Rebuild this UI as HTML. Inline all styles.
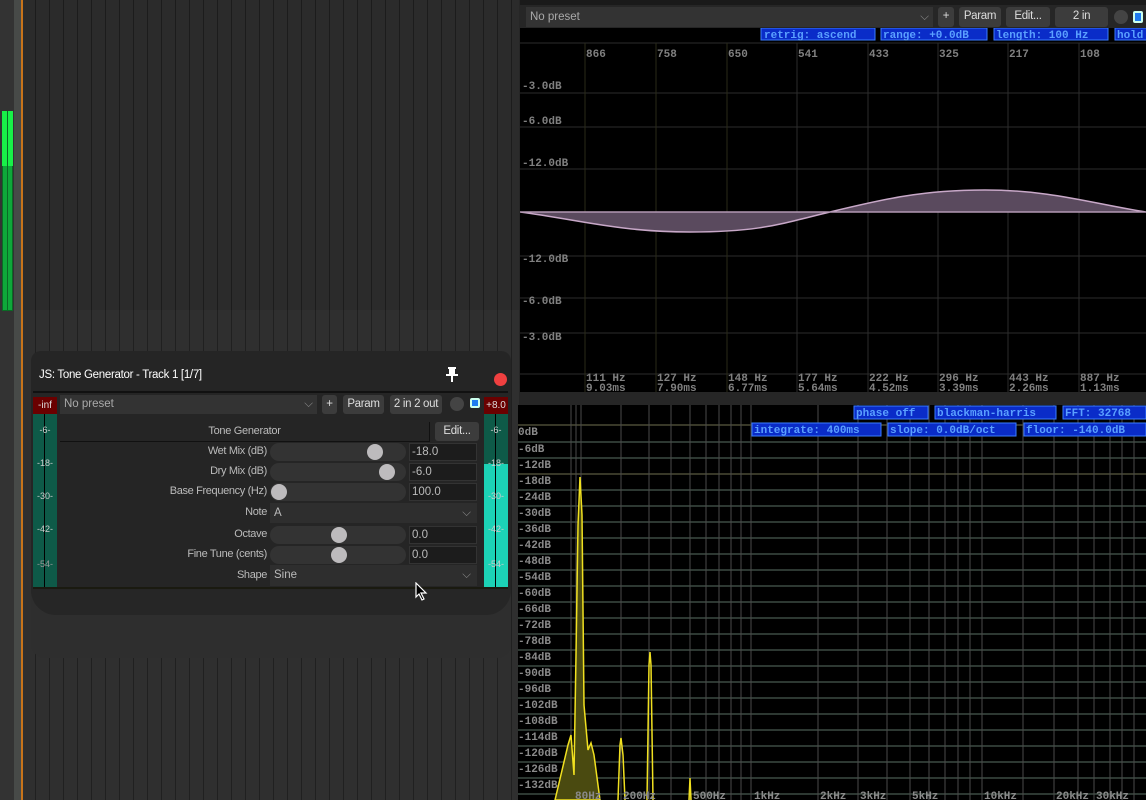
<!DOCTYPE html>
<html><head><meta charset="utf-8"><style>
*{margin:0;padding:0;box-sizing:border-box}
body{width:1146px;height:800px;overflow:hidden;background:#2a2a2a;position:relative;font-family:"Liberation Sans",sans-serif}
.abs{position:absolute}
.arr{background:repeating-linear-gradient(90deg,transparent 0 13px,#1c1c1c 13px 14px);}
.btn{position:absolute;background:#3c3c3c;color:#ddd;font-size:11.5px;letter-spacing:-0.3px;text-align:center;border-radius:3px;line-height:19px}
.lbl{position:absolute;right:879px;color:#bbb;font-size:11px;letter-spacing:-0.35px;text-align:right;width:200px}
.trk{position:absolute;left:270px;width:136px;height:18px;background:#333;border-radius:9px}
.knob{position:absolute;width:16px;height:16px;border-radius:50%;background:#bdbbbd;top:1px}
.val{position:absolute;left:409px;width:68px;height:18px;background:#1c1c1c;border:1px solid #333;color:#bbb;font-size:11.5px;padding-left:2px;line-height:16px}
.ml{position:absolute;font-size:9px;color:#ccc;width:24px;text-align:center}
</style></head><body>
<div class="abs arr" style="left:22px;top:0;width:500px;height:800px;background-color:#2b2b2b"></div>
<div class="abs" style="left:22px;top:310px;width:500px;height:490px;background:rgba(255,255,255,0.02)"></div>
<div class="abs" style="left:0;top:0;width:14px;height:800px;background:#333"></div>
<div class="abs" style="left:2px;top:111px;width:11px;height:200px;background:#0fa83a;border:1px solid #0a6a25"></div>
<div class="abs" style="left:2px;top:111px;width:11px;height:55px;background:#18f048"></div>
<div class="abs" style="left:7px;top:111px;width:1px;height:200px;background:#0a6a25"></div>
<div class="abs" style="left:14px;top:0;width:7px;height:800px;background:#474a48"></div>
<div class="abs" style="left:21px;top:0;width:2px;height:800px;background:#c8741a"></div>
<div class="abs" style="left:31px;top:560px;width:480px;height:98px;background:#2e2e2e;border-radius:14px"></div>
<div class="abs" style="left:31px;top:351px;width:480px;height:250px;background:#252525;border-radius:10px"></div>
<div class="abs" style="left:31px;top:590px;width:480px;height:25px;background:#262626;border-radius:0 0 40px 40px"></div>
<div class="abs" style="left:39px;top:369px;color:#fff;font-size:11.5px;letter-spacing:-0.3px">JS: Tone Generator - Track 1 [1/7]</div>
<svg class="abs" style="left:444px;top:367px" width="16" height="16"><rect x="4" y="0" width="8" height="2" fill="#fff"/><rect x="5" y="2" width="6" height="6" fill="#fff"/><rect x="2" y="7" width="12" height="2" fill="#fff"/><rect x="7" y="9" width="2" height="6" fill="#fff"/></svg>
<div class="abs" style="left:494px;top:373px;width:13px;height:13px;border-radius:50%;background:#f04040"></div>
<div class="abs" style="left:33px;top:391px;width:475px;height:2px;background:#111"></div>
<div class="abs" style="left:33px;top:397px;width:24px;height:190px;background:#0e5a48"></div>
<div class="abs" style="left:33px;top:397px;width:24px;height:17px;background:#6a0000;color:#ddd;font-size:10px;text-align:center;line-height:17px">-inf</div>
<div class="abs" style="left:44px;top:414px;width:1px;height:173px;background:#000"></div>
<div class="ml" style="left:33px;top:425px">-6-</div><div class="ml" style="left:33px;top:458px">-18-</div><div class="ml" style="left:33px;top:491px">-30-</div><div class="ml" style="left:33px;top:524px">-42-</div><div class="ml" style="left:33px;top:559px;color:#999">-54-</div>
<div class="abs" style="left:484px;top:397px;width:24px;height:190px;background:#0e5a48"></div>
<div class="abs" style="left:484px;top:464px;width:24px;height:123px;background:#1cd2b6"></div>
<div class="abs" style="left:484px;top:397px;width:24px;height:17px;background:#6a0000;color:#ddd;font-size:10px;text-align:center;line-height:17px">+8.0</div>
<div class="abs" style="left:495px;top:414px;width:1px;height:173px;background:#000"></div>
<div class="ml" style="left:484px;top:425px">-6-</div><div class="ml" style="left:484px;top:458px">-18-</div><div class="ml" style="left:484px;top:491px">-30-</div><div class="ml" style="left:484px;top:524px">-42-</div><div class="ml" style="left:484px;top:559px">-54-</div>
<div class="abs" style="left:60px;top:395px;width:257px;height:19px;background:#333;color:#aaa;font-size:11.5px;padding-left:4px;line-height:19px">No preset<span style="position:absolute;right:4px;color:#888">⌵</span></div>
<div class="btn" style="left:322px;top:395px;width:15px">+</div>
<div class="btn" style="left:343px;top:395px;width:41px">Param</div>
<div class="btn" style="left:390px;top:395px;width:52px">2 in 2 out</div>
<div class="abs" style="left:450px;top:397px;width:14px;height:14px;border-radius:50%;background:#444"></div>
<div class="abs" style="left:470px;top:398px;width:10px;height:10px;border-radius:2px;background:#1e7cf0;border:2px solid #cfe"></div>
<div class="abs" style="left:60px;top:422px;width:370px;height:20px;border-bottom:1px solid #111;border-right:1px solid #111;color:#bbb;font-size:11px;letter-spacing:-0.3px;text-align:center;line-height:19px">Tone Generator</div>
<div class="btn" style="left:435px;top:422px;width:44px">Edit...</div>
<div class="lbl" style="top:445px">Wet Mix (dB)</div><div class="trk" style="top:443px"><div class="knob" style="left:97px"></div></div><div class="val" style="top:443px">-18.0</div>
<div class="lbl" style="top:465px">Dry Mix (dB)</div><div class="trk" style="top:463px"><div class="knob" style="left:109px"></div></div><div class="val" style="top:463px">-6.0</div>
<div class="lbl" style="top:485px">Base Frequency (Hz)</div><div class="trk" style="top:483px"><div class="knob" style="left:1px"></div></div><div class="val" style="top:483px">100.0</div>
<div class="lbl" style="top:506px">Note</div><div class="abs" style="left:270px;top:503px;width:207px;height:20px;background:#2e2e2e;color:#bbb;font-size:11.5px;padding-left:4px;line-height:20px">A<span style="position:absolute;right:6px;color:#888">⌵</span></div>
<div class="lbl" style="top:528px">Octave</div><div class="trk" style="top:526px"><div class="knob" style="left:61px"></div></div><div class="val" style="top:526px">0.0</div>
<div class="lbl" style="top:548px">Fine Tune (cents)</div><div class="trk" style="top:546px"><div class="knob" style="left:61px"></div></div><div class="val" style="top:546px">0.0</div>
<div class="lbl" style="top:569px">Shape</div><div class="abs" style="left:270px;top:565px;width:207px;height:21px;background:#2e2e2e;color:#bbb;font-size:11.5px;padding-left:4px;line-height:21px">Sine<span style="position:absolute;right:6px;color:#888">⌵</span></div>
<div class="abs" style="left:33px;top:587px;width:475px;height:2px;background:#1a1a10"></div>
<svg class="abs" style="left:415px;top:582px" width="14" height="20"><path d="M1 1 L1 15 L4 12 L7 18 L9 17 L6 11 L11 11 Z" fill="#000" stroke="#fff" stroke-width="1.2"/></svg>

<div class="abs" style="left:519px;top:0;width:627px;height:405px;background:#262626"></div>
<div class="abs" style="left:520px;top:0;width:626px;height:5px;background:#1a1a1a"></div>
<div class="abs" style="left:526px;top:7px;width:407px;height:20px;background:#333;color:#aaa;font-size:11.5px;padding-left:4px;line-height:20px">No preset<span style="position:absolute;right:4px;color:#888">⌵</span></div>
<div class="btn" style="left:938px;top:7px;width:16px;height:20px">+</div>
<div class="btn" style="left:959px;top:7px;width:42px;height:20px">Param</div>
<div class="btn" style="left:1006px;top:7px;width:44px;height:20px">Edit...</div>
<div class="btn" style="left:1055px;top:7px;width:53px;height:20px">2 in</div>
<div class="abs" style="left:1114px;top:10px;width:14px;height:14px;border-radius:50%;background:#444"></div>
<div class="abs" style="left:1133px;top:11px;width:10px;height:12px;border-radius:2px;background:#1e7cf0;border:2px solid #cfe"></div>
<svg class="abs" style="left:520px;top:28px" width="626" height="372">
<rect width="626" height="364" fill="#000"/>
<g font-family="Liberation Mono,monospace" font-size="11" font-weight="bold">
<rect x="241" y="0" width="114" height="12" fill="#0a2cc8" stroke="#3a7cff"/><text x="244" y="10" fill="#5aa0ff">retrig: ascend</text>
<rect x="361" y="0" width="106" height="12" fill="#0a2cc8" stroke="#3a7cff"/><text x="363" y="10" fill="#5aa0ff">range: +0.0dB</text>
<rect x="474" y="0" width="114" height="12" fill="#0a2cc8" stroke="#3a7cff"/><text x="476" y="10" fill="#5aa0ff">length: 100 Hz</text>
<rect x="595" y="0" width="40" height="12" fill="#0a2cc8" stroke="#3a7cff"/><text x="597" y="10" fill="#5aa0ff">hold</text>
</g>
<g stroke="#2c2c2c" stroke-width="1">
<line x1="0" y1="15" x2="626" y2="15"/><line x1="0" y1="65" x2="626" y2="65"/><line x1="0" y1="99" x2="626" y2="99"/><line x1="0" y1="141" x2="626" y2="141"/><line x1="0" y1="184" x2="626" y2="184"/><line x1="0" y1="228" x2="626" y2="228"/><line x1="0" y1="270" x2="626" y2="270"/><line x1="0" y1="305" x2="626" y2="305"/><line x1="0" y1="346" x2="626" y2="346"/>
<line x1="65" y1="15" x2="65" y2="364" stroke="#2a2a18"/><line x1="136" y1="15" x2="136" y2="364" stroke="#2a2a18"/><line x1="207" y1="15" x2="207" y2="364" stroke="#2a2a18"/><line x1="277" y1="15" x2="277" y2="364"/><line x1="348" y1="15" x2="348" y2="364"/><line x1="418" y1="15" x2="418" y2="364"/><line x1="488" y1="15" x2="488" y2="364"/><line x1="559" y1="15" x2="559" y2="364"/>
</g>
<path d="M0 184 C 60 192, 100 204, 170 204 C 240 204, 260 196, 310 184 C 360 172, 400 162, 465 162 C 530 162, 570 175, 626 184 Z" fill="#5a4a5e" stroke="#c8a8c8" stroke-width="1.5"/>
<line x1="0" y1="184" x2="626" y2="184" stroke="#a890a8"/>
<g font-family="Liberation Mono,monospace" font-size="11" fill="#808080" font-weight="bold">
<text x="66" y="29">866</text><text x="137" y="29">758</text><text x="208" y="29">650</text><text x="278" y="29">541</text><text x="349" y="29">433</text><text x="419" y="29">325</text><text x="489" y="29">217</text><text x="560" y="29">108</text>
<text x="2" y="61">-3.0dB</text><text x="2" y="96">-6.0dB</text><text x="2" y="138">-12.0dB</text><text x="2" y="234">-12.0dB</text><text x="2" y="276">-6.0dB</text><text x="2" y="312">-3.0dB</text>
<text x="66" y="353">111 Hz</text><text x="137" y="353">127 Hz</text><text x="208" y="353">148 Hz</text><text x="278" y="353">177 Hz</text><text x="349" y="353">222 Hz</text><text x="419" y="353">296 Hz</text><text x="489" y="353">443 Hz</text><text x="560" y="353">887 Hz</text>
<text x="66" y="363">9.03ms</text><text x="137" y="363">7.90ms</text><text x="208" y="363">6.77ms</text><text x="278" y="363">5.64ms</text><text x="349" y="363">4.52ms</text><text x="419" y="363">3.39ms</text><text x="489" y="363">2.26ms</text><text x="560" y="363">1.13ms</text>
</g>
</svg>
<svg class="abs" style="left:518px;top:405px" width="628" height="395">
<rect width="628" height="395" fill="#000"/>
<g stroke="#3c4a42" stroke-width="1.5">
<line x1="0" y1="20" x2="628" y2="20" stroke="#4a4a36"/><line x1="0" y1="37" x2="628" y2="37"/><line x1="0" y1="53" x2="628" y2="53"/><line x1="0" y1="69" x2="628" y2="69" stroke="#4a4a36"/><line x1="0" y1="85" x2="628" y2="85"/><line x1="0" y1="101" x2="628" y2="101"/><line x1="0" y1="117" x2="628" y2="117"/><line x1="0" y1="133" x2="628" y2="133"/><line x1="0" y1="149" x2="628" y2="149"/><line x1="0" y1="165" x2="628" y2="165"/><line x1="0" y1="181" x2="628" y2="181"/><line x1="0" y1="197" x2="628" y2="197"/><line x1="0" y1="213" x2="628" y2="213"/><line x1="0" y1="229" x2="628" y2="229"/><line x1="0" y1="245" x2="628" y2="245"/><line x1="0" y1="261" x2="628" y2="261"/><line x1="0" y1="277" x2="628" y2="277"/><line x1="0" y1="293" x2="628" y2="293"/><line x1="0" y1="309" x2="628" y2="309"/><line x1="0" y1="325" x2="628" y2="325"/><line x1="0" y1="341" x2="628" y2="341"/><line x1="0" y1="357" x2="628" y2="357"/><line x1="0" y1="373" x2="628" y2="373"/><line x1="0" y1="389" x2="628" y2="389"/>
</g>
<g stroke="#4a4a4a" stroke-width="1">
<line x1="53" y1="0" x2="53" y2="395"/><line x1="58" y1="0" x2="58" y2="395"/><line x1="63" y1="0" x2="63" y2="395"/><line x1="103" y1="0" x2="103" y2="395"/><line x1="131" y1="0" x2="131" y2="395"/><line x1="153" y1="0" x2="153" y2="395"/><line x1="172" y1="0" x2="172" y2="395"/><line x1="188" y1="0" x2="188" y2="395"/><line x1="201" y1="0" x2="201" y2="395"/><line x1="213" y1="0" x2="213" y2="395"/><line x1="223" y1="0" x2="223" y2="395"/><line x1="233" y1="0" x2="233" y2="395"/><line x1="300" y1="0" x2="300" y2="395"/><line x1="340" y1="0" x2="340" y2="395"/><line x1="369" y1="0" x2="369" y2="395"/><line x1="392" y1="0" x2="392" y2="395"/><line x1="411" y1="0" x2="411" y2="395"/><line x1="427" y1="0" x2="427" y2="395"/><line x1="440" y1="0" x2="440" y2="395"/><line x1="452" y1="0" x2="452" y2="395"/><line x1="464" y1="0" x2="464" y2="395"/><line x1="505" y1="0" x2="505" y2="395"/><line x1="536" y1="0" x2="536" y2="395"/><line x1="560" y1="0" x2="560" y2="395"/><line x1="576" y1="0" x2="576" y2="395"/><line x1="592" y1="0" x2="592" y2="395"/><line x1="604" y1="0" x2="604" y2="395"/><line x1="616" y1="0" x2="616" y2="395"/>
</g>
<path d="M37 395 L50 340 L53 330 L56 370 L58 250 L60 120 L62 72 L64 110 L66 300 L70 345 L73 338 L76 350 L82 395 Z" fill="#4a4a10" stroke="#f0e020" stroke-width="1.5"/>
<path d="M100 395 L102 340 L103 333 L105 350 L107 395" fill="none" stroke="#f0e020" stroke-width="1.5"/>
<path d="M129 395 L131 260 L132 247 L133 260 L135 395" fill="none" stroke="#f0e020" stroke-width="1.5"/>
<path d="M171 395 L172 373 L173 395" fill="none" stroke="#f0e020" stroke-width="1.5"/>
<g font-family="Liberation Mono,monospace" font-size="11" font-weight="bold">
<rect x="336" y="1" width="74" height="13" fill="#0a2cc8" stroke="#3a7cff"/><text x="338" y="11" fill="#5aa0ff">phase off</text>
<rect x="417" y="1" width="121" height="13" fill="#0a2cc8" stroke="#3a7cff"/><text x="419" y="11" fill="#5aa0ff">blackman-harris</text>
<rect x="545" y="1" width="83" height="13" fill="#0a2cc8" stroke="#3a7cff"/><text x="547" y="11" fill="#5aa0ff">FFT: 32768</text>
<rect x="234" y="18" width="129" height="13" fill="#0a2cc8" stroke="#3a7cff"/><text x="236" y="28" fill="#5aa0ff">integrate: 400ms</text>
<rect x="370" y="18" width="128" height="13" fill="#0a2cc8" stroke="#3a7cff"/><text x="372" y="28" fill="#5aa0ff">slope: 0.0dB/oct</text>
<rect x="506" y="18" width="122" height="13" fill="#0a2cc8" stroke="#3a7cff"/><text x="508" y="28" fill="#5aa0ff">floor: -140.0dB</text>
<g fill="#8a8a8a">
<text x="0" y="30">0dB</text><text x="0" y="47">-6dB</text><text x="0" y="63">-12dB</text><text x="0" y="79">-18dB</text><text x="0" y="95">-24dB</text><text x="0" y="111">-30dB</text><text x="0" y="127">-36dB</text><text x="0" y="143">-42dB</text><text x="0" y="159">-48dB</text><text x="0" y="175">-54dB</text><text x="0" y="191">-60dB</text><text x="0" y="207">-66dB</text><text x="0" y="223">-72dB</text><text x="0" y="239">-78dB</text><text x="0" y="255">-84dB</text><text x="0" y="271">-90dB</text><text x="0" y="287">-96dB</text><text x="0" y="303">-102dB</text><text x="0" y="319">-108dB</text><text x="0" y="335">-114dB</text><text x="0" y="351">-120dB</text><text x="0" y="367">-126dB</text><text x="0" y="383">-132dB</text>
<text x="57" y="394">80Hz</text><text x="105" y="394">200Hz</text><text x="175" y="394">500Hz</text><text x="236" y="394">1kHz</text><text x="302" y="394">2kHz</text><text x="342" y="394">3kHz</text><text x="394" y="394">5kHz</text><text x="466" y="394">10kHz</text><text x="538" y="394">20kHz</text><text x="578" y="394">30kHz</text>
</g></g>
</svg>
</body></html>
